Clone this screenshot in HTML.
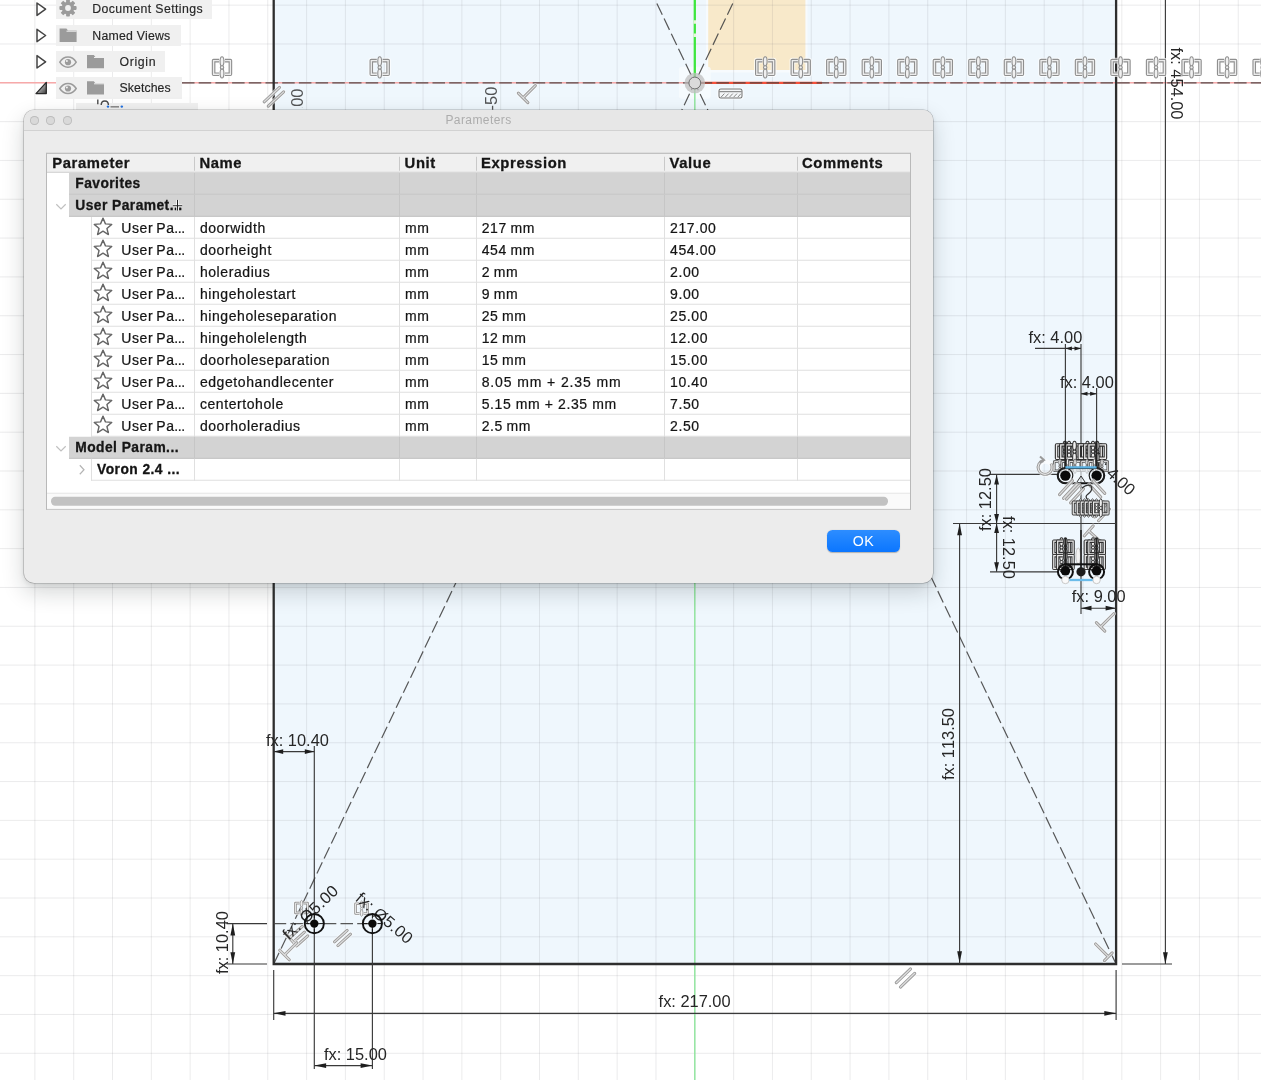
<!DOCTYPE html>
<html lang="en"><head><meta charset="utf-8"><title>Parameters</title>
<style>
html,body{margin:0;padding:0;background:#fff;}
body{width:1261px;height:1080px;position:relative;overflow:hidden;font-family:"Liberation Sans",Arial,sans-serif;}
.cv{position:absolute;left:0;top:0;display:block;will-change:transform;}
.tree{will-change:transform;position:absolute;left:0;top:0;width:260px;height:112px;overflow:hidden;}
.ti{position:absolute;background:#f0f0f0;}
.tt{position:absolute;font-size:12.3px;line-height:14px;color:#262626;-webkit-text-stroke:.15px #262626;letter-spacing:.62px;white-space:nowrap;}
.tsvg{position:absolute;left:0;top:0;}
.dlg{will-change:transform;position:absolute;left:24px;top:110px;width:909px;height:473px;background:#ececec;border-radius:10px;
 box-shadow:0 0 0 .6px rgba(0,0,0,.26),0 9px 22px rgba(20,30,30,.19),0 2px 6px rgba(20,30,30,.10);}
.tbar{position:absolute;left:0;top:0;right:0;height:20px;background:#e7e7e7;border-radius:10px 10px 0 0;border-bottom:1px solid #d2d2d2;}
.tl{position:absolute;top:5.8px;width:9.2px;height:9.2px;border-radius:50%;background:#d9d9d9;box-shadow:inset 0 0 0 .9px #bcbcbc;}
.ttl{position:absolute;left:0;right:0;top:3px;text-align:center;font-size:12px;line-height:14px;color:#adadad;letter-spacing:.42px;}
.tbl{position:absolute;left:22px;top:42px;width:865px;height:357px;background:#fff;border:1px solid #b9b9b9;border-top-color:#a9a9a9;box-sizing:border-box;overflow:hidden;transform:translate(0,.75px);}
.hd{position:absolute;left:0;top:0;right:0;height:18px;background:#f0f0f0;border-bottom:1px solid #cfcfcf;}
.h{position:absolute;top:0;font-weight:bold;font-size:14.8px;line-height:18px;color:#161616;letter-spacing:.62px;-webkit-text-stroke:.3px #161616;white-space:nowrap;}
.hs{position:absolute;top:2.5px;width:1px;height:14px;background:#c9c9c9;}
.gr{position:absolute;left:0;right:0;height:22px;}
.gbg{position:absolute;left:22px;right:0;top:0;bottom:0;background:#d3d3d3;border-bottom:1px solid #c2c2c2;box-sizing:border-box;}
.gl{position:absolute;left:28.3px;top:1.9px;font-weight:bold;font-size:13.8px;line-height:18px;color:#161616;letter-spacing:.45px;-webkit-text-stroke:.3px #161616;white-space:nowrap;}
.chv{position:absolute;left:7.5px;top:7.5px;}
.plus{position:absolute;left:124.6px;top:5px;}
.vs{position:absolute;top:0;bottom:0;width:1px;background:#c6c6c6;}
.rw{position:absolute;left:0;right:0;height:22px;}
.rw::after{content:"";position:absolute;left:44px;right:0;bottom:0;height:1px;background:#e0e0e0;}
.rw .vs{background:#e0e0e0;}
.star{position:absolute;left:46.2px;top:.3px;}
.c{position:absolute;top:2.8px;font-size:14px;line-height:17px;color:#141414;letter-spacing:.58px;margin-left:.1px;-webkit-text-stroke:.22px #141414;white-space:nowrap;}
.c.p{word-spacing:-1.3px}
.c u{text-decoration:none;letter-spacing:-.35px;margin-left:-.4px}
.c.b{top:2.1px;font-weight:bold;font-size:13.8px;letter-spacing:.45px;-webkit-text-stroke:.3px #161616;}
.chr{position:absolute;left:31px;top:4.5px;}
.sb{position:absolute;left:0;right:0;bottom:0;height:16px;background:#fafafa;border-top:1px solid #e6e6e6;box-sizing:border-box;}
.th{position:absolute;left:4px;top:3.4px;width:836.5px;height:8.4px;border-radius:4.2px;background:#c2c2c2;}
.ok{position:absolute;left:803px;top:420px;width:73px;height:22px;border-radius:5.5px;background:linear-gradient(#2d8dff,#0b76ff);color:#fff;font-size:14.2px;line-height:22px;text-align:center;letter-spacing:.4px;box-shadow:0 .5px 1px rgba(0,0,0,.25);}
</style></head>
<body>
<svg class="cv" width="1261" height="1080" viewBox="0 0 1261 1080"><rect x="0" y="0" width="1261" height="1080" fill="#ffffff"/>
<rect x="273.7" y="-5" width="842.3999999999999" height="969.0" fill="#eff7fd"/>
<rect x="706" y="-5" width="101.5" height="77.5" fill="#f7fbfe"/>
<rect x="708.2" y="-5" width="97.2" height="75" fill="#f8e9ca"/>
<rect x="678.8" y="66.8" width="32" height="32" rx="3" fill="#f7fbfe" fill-opacity="0.8"/>
<path d="M34.86 0V1080M73.68 0V1080M112.50 0V1080M151.32 0V1080M190.14 0V1080M228.96 0V1080M267.78 0V1080M306.60 0V1080M345.42 0V1080M384.24 0V1080M423.06 0V1080M461.88 0V1080M500.70 0V1080M539.52 0V1080M578.34 0V1080M617.16 0V1080M655.98 0V1080M694.80 0V1080M733.62 0V1080M772.44 0V1080M811.26 0V1080M850.08 0V1080M888.90 0V1080M927.72 0V1080M966.54 0V1080M1005.36 0V1080M1044.18 0V1080M1083.00 0V1080M1121.82 0V1080M1160.64 0V1080M1199.46 0V1080M1238.28 0V1080M0 5.16H1261M0 43.98H1261M0 82.80H1261M0 121.62H1261M0 160.44H1261M0 199.26H1261M0 238.08H1261M0 276.90H1261M0 315.72H1261M0 354.54H1261M0 393.36H1261M0 432.18H1261M0 471.00H1261M0 509.82H1261M0 548.64H1261M0 587.46H1261M0 626.28H1261M0 665.10H1261M0 703.92H1261M0 742.74H1261M0 781.56H1261M0 820.38H1261M0 859.20H1261M0 898.02H1261M0 936.84H1261M0 975.66H1261M0 1014.48H1261M0 1053.30H1261" stroke="#6e7276" stroke-opacity="0.14" stroke-width="1" fill="none"/>
<line x1="0" y1="82.8" x2="1261" y2="82.8" stroke="#f7a9a9" stroke-width="1.6"/>
<line x1="694.8" y1="82.8" x2="822" y2="82.8" stroke="#f8503a" stroke-width="2.3"/>
<line x1="694.8" y1="82.8" x2="694.8" y2="1080" stroke="#93e5a0" stroke-width="1.5"/>
<line x1="694.8" y1="0" x2="694.8" y2="82.8" stroke="#3fe63f" stroke-width="2.3"/>
<path d="M694.8 20.2v3.6M694.8 33.4v3.6" stroke="#e9f7dc" stroke-width="2.4"/>
<line x1="182" y1="82.8" x2="1261" y2="82.8" stroke="#454545" stroke-opacity="0.9" stroke-width="1.2" stroke-dasharray="12.5 4.2" fill="none"/>
<line x1="273.7" y1="964.0" x2="736.8" y2="-5" stroke="#454545" stroke-opacity="0.9" stroke-width="1.2" stroke-dasharray="12.5 4.2" fill="none"/>
<line x1="1116.1" y1="964.0" x2="652.8" y2="-5" stroke="#454545" stroke-opacity="0.9" stroke-width="1.2" stroke-dasharray="12.5 4.2" fill="none"/>
<path d="M273.7 -5V964.0H1116.1V-5" stroke="#2e2e2e" stroke-width="2.3" fill="none" stroke-linejoin="miter"/>
<circle cx="694.8" cy="83.0" r="10.3" fill="#bdbdbd" fill-opacity="0.72"/>
<circle cx="694.8" cy="83.0" r="5.9" fill="#dadada" stroke="#707070" stroke-width="1"/>
<g transform="translate(718.4 88.4)"><rect x="-1" y="-1" width="26.2" height="12" rx="2.5" fill="#fff" fill-opacity="0.7"/><rect x="0.6" y="0.6" width="23" height="9" rx="1.8" fill="#f4f6f7" stroke="#767676" stroke-width="1.05"/><path d="M1 3.3H23.2" stroke="#767676" stroke-width="1" fill="none"/><path d="M2.6 8.8L6 5.2M6.8 8.8L10.2 5.2M11 8.8L14.4 5.2M15.2 8.8L18.6 5.2M19.4 8.8L22.4 5.4" stroke="#7c7c7c" stroke-width="0.9" fill="none"/></g>
<g transform="translate(273.9 96.8) rotate(-43)"><path d="M-10.5 -3.0H10.5M-10.5 3.0H10.5" stroke="#ffffff" stroke-opacity="0.6" stroke-width="4.6" stroke-linecap="round" fill="none"/><path d="M-10.5 -3.0H10.5M-10.5 3.0H10.5" stroke="#9c9c9c" stroke-opacity="1" stroke-width="3.1" stroke-linecap="round" fill="none"/><path d="M-10.5 -3.0H10.5M-10.5 3.0H10.5" stroke="#dedede" stroke-opacity="1" stroke-width="1.2" stroke-linecap="round" fill="none"/></g>
<g transform="translate(523.1 97.9) rotate(45)"><path d="M-6.75 0H6.75M0 0V-17.3" stroke="#ffffff" stroke-opacity="0.6" stroke-width="4.6" stroke-linecap="round" fill="none"/><path d="M-6.75 0H6.75M0 0V-17.3" stroke="#9c9c9c" stroke-opacity="1" stroke-width="3.1" stroke-linecap="round" fill="none"/><path d="M-6.75 0H6.75M0 0V-17.3" stroke="#dedede" stroke-opacity="1" stroke-width="1.2" stroke-linecap="round" fill="none"/></g>
<g transform="translate(905.5 978) rotate(-44)"><path d="M-9.9 -3.0H9.9M-9.9 3.0H9.9" stroke="#ffffff" stroke-opacity="0.6" stroke-width="4.6" stroke-linecap="round" fill="none"/><path d="M-9.9 -3.0H9.9M-9.9 3.0H9.9" stroke="#9c9c9c" stroke-opacity="1" stroke-width="3.1" stroke-linecap="round" fill="none"/><path d="M-9.9 -3.0H9.9M-9.9 3.0H9.9" stroke="#dedede" stroke-opacity="1" stroke-width="1.2" stroke-linecap="round" fill="none"/></g>
<g transform="translate(1108.3 956.7) rotate(-45)"><path d="M-5.5 0H5.5M0 0V-18" stroke="#ffffff" stroke-opacity="0.6" stroke-width="4.6" stroke-linecap="round" fill="none"/><path d="M-5.5 0H5.5M0 0V-18" stroke="#9c9c9c" stroke-opacity="1" stroke-width="3.1" stroke-linecap="round" fill="none"/><path d="M-5.5 0H5.5M0 0V-18" stroke="#dedede" stroke-opacity="1" stroke-width="1.2" stroke-linecap="round" fill="none"/></g>
<clipPath id="rc"><rect x="0" y="0" width="1261" height="107.4"/></clipPath><g clip-path="url(#rc)">
<text x="303.2" y="121.4" text-anchor="start" font-family="Liberation Sans, Arial, sans-serif" font-size="16.4" fill="#262626" style="font-kerning:none" transform="rotate(-90 303.2 121.4)" fill-opacity="0.78">-100</text>
</g>
<text x="496.9" y="110.4" text-anchor="start" font-family="Liberation Sans, Arial, sans-serif" font-size="16.4" fill="#262626" style="font-kerning:none" transform="rotate(-90 496.9 110.4)" fill-opacity="0.78">-50</text>
<line x1="1165.4" y1="-5" x2="1165.4" y2="964.0" stroke="#3a3a3a" stroke-width="1.15" fill="none"/>
<path d="M0 0L-11.8 -2.4L-11.8 2.4Z" fill="#1e1e1e" transform="translate(1165.4 964.0) rotate(90)"/>
<line x1="1122" y1="964.0" x2="1172" y2="964.0" stroke="#3a3a3a" stroke-width="1.15" fill="none"/>
<text x="1171.3" y="47.5" text-anchor="start" font-family="Liberation Sans, Arial, sans-serif" font-size="16.4" fill="#262626" style="font-kerning:none" transform="rotate(90 1171.3 47.5)">fx: 454.00</text>
<g transform="translate(222 67.4) scale(1.0)" opacity="1"><path d="M-2.9 -6.8H-8.4V6.8H-2.9 M2.9 -6.8H8.4V6.8H2.9" stroke="#ffffff" stroke-opacity="0.7" stroke-width="5.6" fill="none" stroke-linejoin="round"/><path d="M-2.9 -6.8H-8.4V6.8H-2.9 M2.9 -6.8H8.4V6.8H2.9" stroke="#8f8f8f" stroke-width="3.6" fill="none" stroke-linejoin="round"/><path d="M-2.9 -6.8H-8.4V6.8H-2.9 M2.9 -6.8H8.4V6.8H2.9" stroke="#ececec" stroke-width="1.35" fill="none" stroke-linecap="square"/><ellipse cx="0" cy="-5.9" rx="1.9" ry="4.7" fill="#f0f0f0" stroke="#8f8f8f" stroke-width="1.1"/><ellipse cx="0" cy="5.9" rx="1.9" ry="4.7" fill="#f0f0f0" stroke="#8f8f8f" stroke-width="1.1"/><circle cx="0" cy="0" r="1.7" fill="#f0f0f0" stroke="#8f8f8f" stroke-width="1.1"/></g>
<g transform="translate(379.7 67.4) scale(1.0)" opacity="1"><path d="M-2.9 -6.8H-8.4V6.8H-2.9 M2.9 -6.8H8.4V6.8H2.9" stroke="#ffffff" stroke-opacity="0.7" stroke-width="5.6" fill="none" stroke-linejoin="round"/><path d="M-2.9 -6.8H-8.4V6.8H-2.9 M2.9 -6.8H8.4V6.8H2.9" stroke="#8f8f8f" stroke-width="3.6" fill="none" stroke-linejoin="round"/><path d="M-2.9 -6.8H-8.4V6.8H-2.9 M2.9 -6.8H8.4V6.8H2.9" stroke="#ececec" stroke-width="1.35" fill="none" stroke-linecap="square"/><ellipse cx="0" cy="-5.9" rx="1.9" ry="4.7" fill="#f0f0f0" stroke="#8f8f8f" stroke-width="1.1"/><ellipse cx="0" cy="5.9" rx="1.9" ry="4.7" fill="#f0f0f0" stroke="#8f8f8f" stroke-width="1.1"/><circle cx="0" cy="0" r="1.7" fill="#f0f0f0" stroke="#8f8f8f" stroke-width="1.1"/></g>
<g transform="translate(765.2 67.4) scale(1.0)" opacity="1"><path d="M-2.9 -6.8H-8.4V6.8H-2.9 M2.9 -6.8H8.4V6.8H2.9" stroke="#ffffff" stroke-opacity="0.7" stroke-width="5.6" fill="none" stroke-linejoin="round"/><path d="M-2.9 -6.8H-8.4V6.8H-2.9 M2.9 -6.8H8.4V6.8H2.9" stroke="#8f8f8f" stroke-width="3.6" fill="none" stroke-linejoin="round"/><path d="M-2.9 -6.8H-8.4V6.8H-2.9 M2.9 -6.8H8.4V6.8H2.9" stroke="#ececec" stroke-width="1.35" fill="none" stroke-linecap="square"/><ellipse cx="0" cy="-5.9" rx="1.9" ry="4.7" fill="#f0f0f0" stroke="#8f8f8f" stroke-width="1.1"/><ellipse cx="0" cy="5.9" rx="1.9" ry="4.7" fill="#f0f0f0" stroke="#8f8f8f" stroke-width="1.1"/><circle cx="0" cy="0" r="1.7" fill="#f0f0f0" stroke="#8f8f8f" stroke-width="1.1"/></g>
<g transform="translate(800.73 67.4) scale(1.0)" opacity="1"><path d="M-2.9 -6.8H-8.4V6.8H-2.9 M2.9 -6.8H8.4V6.8H2.9" stroke="#ffffff" stroke-opacity="0.7" stroke-width="5.6" fill="none" stroke-linejoin="round"/><path d="M-2.9 -6.8H-8.4V6.8H-2.9 M2.9 -6.8H8.4V6.8H2.9" stroke="#8f8f8f" stroke-width="3.6" fill="none" stroke-linejoin="round"/><path d="M-2.9 -6.8H-8.4V6.8H-2.9 M2.9 -6.8H8.4V6.8H2.9" stroke="#ececec" stroke-width="1.35" fill="none" stroke-linecap="square"/><ellipse cx="0" cy="-5.9" rx="1.9" ry="4.7" fill="#f0f0f0" stroke="#8f8f8f" stroke-width="1.1"/><ellipse cx="0" cy="5.9" rx="1.9" ry="4.7" fill="#f0f0f0" stroke="#8f8f8f" stroke-width="1.1"/><circle cx="0" cy="0" r="1.7" fill="#f0f0f0" stroke="#8f8f8f" stroke-width="1.1"/></g>
<g transform="translate(836.26 67.4) scale(1.0)" opacity="1"><path d="M-2.9 -6.8H-8.4V6.8H-2.9 M2.9 -6.8H8.4V6.8H2.9" stroke="#ffffff" stroke-opacity="0.7" stroke-width="5.6" fill="none" stroke-linejoin="round"/><path d="M-2.9 -6.8H-8.4V6.8H-2.9 M2.9 -6.8H8.4V6.8H2.9" stroke="#8f8f8f" stroke-width="3.6" fill="none" stroke-linejoin="round"/><path d="M-2.9 -6.8H-8.4V6.8H-2.9 M2.9 -6.8H8.4V6.8H2.9" stroke="#ececec" stroke-width="1.35" fill="none" stroke-linecap="square"/><ellipse cx="0" cy="-5.9" rx="1.9" ry="4.7" fill="#f0f0f0" stroke="#8f8f8f" stroke-width="1.1"/><ellipse cx="0" cy="5.9" rx="1.9" ry="4.7" fill="#f0f0f0" stroke="#8f8f8f" stroke-width="1.1"/><circle cx="0" cy="0" r="1.7" fill="#f0f0f0" stroke="#8f8f8f" stroke-width="1.1"/></g>
<g transform="translate(871.79 67.4) scale(1.0)" opacity="1"><path d="M-2.9 -6.8H-8.4V6.8H-2.9 M2.9 -6.8H8.4V6.8H2.9" stroke="#ffffff" stroke-opacity="0.7" stroke-width="5.6" fill="none" stroke-linejoin="round"/><path d="M-2.9 -6.8H-8.4V6.8H-2.9 M2.9 -6.8H8.4V6.8H2.9" stroke="#8f8f8f" stroke-width="3.6" fill="none" stroke-linejoin="round"/><path d="M-2.9 -6.8H-8.4V6.8H-2.9 M2.9 -6.8H8.4V6.8H2.9" stroke="#ececec" stroke-width="1.35" fill="none" stroke-linecap="square"/><ellipse cx="0" cy="-5.9" rx="1.9" ry="4.7" fill="#f0f0f0" stroke="#8f8f8f" stroke-width="1.1"/><ellipse cx="0" cy="5.9" rx="1.9" ry="4.7" fill="#f0f0f0" stroke="#8f8f8f" stroke-width="1.1"/><circle cx="0" cy="0" r="1.7" fill="#f0f0f0" stroke="#8f8f8f" stroke-width="1.1"/></g>
<g transform="translate(907.3199999999999 67.4) scale(1.0)" opacity="1"><path d="M-2.9 -6.8H-8.4V6.8H-2.9 M2.9 -6.8H8.4V6.8H2.9" stroke="#ffffff" stroke-opacity="0.7" stroke-width="5.6" fill="none" stroke-linejoin="round"/><path d="M-2.9 -6.8H-8.4V6.8H-2.9 M2.9 -6.8H8.4V6.8H2.9" stroke="#8f8f8f" stroke-width="3.6" fill="none" stroke-linejoin="round"/><path d="M-2.9 -6.8H-8.4V6.8H-2.9 M2.9 -6.8H8.4V6.8H2.9" stroke="#ececec" stroke-width="1.35" fill="none" stroke-linecap="square"/><ellipse cx="0" cy="-5.9" rx="1.9" ry="4.7" fill="#f0f0f0" stroke="#8f8f8f" stroke-width="1.1"/><ellipse cx="0" cy="5.9" rx="1.9" ry="4.7" fill="#f0f0f0" stroke="#8f8f8f" stroke-width="1.1"/><circle cx="0" cy="0" r="1.7" fill="#f0f0f0" stroke="#8f8f8f" stroke-width="1.1"/></g>
<g transform="translate(942.8499999999999 67.4) scale(1.0)" opacity="1"><path d="M-2.9 -6.8H-8.4V6.8H-2.9 M2.9 -6.8H8.4V6.8H2.9" stroke="#ffffff" stroke-opacity="0.7" stroke-width="5.6" fill="none" stroke-linejoin="round"/><path d="M-2.9 -6.8H-8.4V6.8H-2.9 M2.9 -6.8H8.4V6.8H2.9" stroke="#8f8f8f" stroke-width="3.6" fill="none" stroke-linejoin="round"/><path d="M-2.9 -6.8H-8.4V6.8H-2.9 M2.9 -6.8H8.4V6.8H2.9" stroke="#ececec" stroke-width="1.35" fill="none" stroke-linecap="square"/><ellipse cx="0" cy="-5.9" rx="1.9" ry="4.7" fill="#f0f0f0" stroke="#8f8f8f" stroke-width="1.1"/><ellipse cx="0" cy="5.9" rx="1.9" ry="4.7" fill="#f0f0f0" stroke="#8f8f8f" stroke-width="1.1"/><circle cx="0" cy="0" r="1.7" fill="#f0f0f0" stroke="#8f8f8f" stroke-width="1.1"/></g>
<g transform="translate(978.3799999999999 67.4) scale(1.0)" opacity="1"><path d="M-2.9 -6.8H-8.4V6.8H-2.9 M2.9 -6.8H8.4V6.8H2.9" stroke="#ffffff" stroke-opacity="0.7" stroke-width="5.6" fill="none" stroke-linejoin="round"/><path d="M-2.9 -6.8H-8.4V6.8H-2.9 M2.9 -6.8H8.4V6.8H2.9" stroke="#8f8f8f" stroke-width="3.6" fill="none" stroke-linejoin="round"/><path d="M-2.9 -6.8H-8.4V6.8H-2.9 M2.9 -6.8H8.4V6.8H2.9" stroke="#ececec" stroke-width="1.35" fill="none" stroke-linecap="square"/><ellipse cx="0" cy="-5.9" rx="1.9" ry="4.7" fill="#f0f0f0" stroke="#8f8f8f" stroke-width="1.1"/><ellipse cx="0" cy="5.9" rx="1.9" ry="4.7" fill="#f0f0f0" stroke="#8f8f8f" stroke-width="1.1"/><circle cx="0" cy="0" r="1.7" fill="#f0f0f0" stroke="#8f8f8f" stroke-width="1.1"/></g>
<g transform="translate(1013.9099999999999 67.4) scale(1.0)" opacity="1"><path d="M-2.9 -6.8H-8.4V6.8H-2.9 M2.9 -6.8H8.4V6.8H2.9" stroke="#ffffff" stroke-opacity="0.7" stroke-width="5.6" fill="none" stroke-linejoin="round"/><path d="M-2.9 -6.8H-8.4V6.8H-2.9 M2.9 -6.8H8.4V6.8H2.9" stroke="#8f8f8f" stroke-width="3.6" fill="none" stroke-linejoin="round"/><path d="M-2.9 -6.8H-8.4V6.8H-2.9 M2.9 -6.8H8.4V6.8H2.9" stroke="#ececec" stroke-width="1.35" fill="none" stroke-linecap="square"/><ellipse cx="0" cy="-5.9" rx="1.9" ry="4.7" fill="#f0f0f0" stroke="#8f8f8f" stroke-width="1.1"/><ellipse cx="0" cy="5.9" rx="1.9" ry="4.7" fill="#f0f0f0" stroke="#8f8f8f" stroke-width="1.1"/><circle cx="0" cy="0" r="1.7" fill="#f0f0f0" stroke="#8f8f8f" stroke-width="1.1"/></g>
<g transform="translate(1049.4399999999998 67.4) scale(1.0)" opacity="1"><path d="M-2.9 -6.8H-8.4V6.8H-2.9 M2.9 -6.8H8.4V6.8H2.9" stroke="#ffffff" stroke-opacity="0.7" stroke-width="5.6" fill="none" stroke-linejoin="round"/><path d="M-2.9 -6.8H-8.4V6.8H-2.9 M2.9 -6.8H8.4V6.8H2.9" stroke="#8f8f8f" stroke-width="3.6" fill="none" stroke-linejoin="round"/><path d="M-2.9 -6.8H-8.4V6.8H-2.9 M2.9 -6.8H8.4V6.8H2.9" stroke="#ececec" stroke-width="1.35" fill="none" stroke-linecap="square"/><ellipse cx="0" cy="-5.9" rx="1.9" ry="4.7" fill="#f0f0f0" stroke="#8f8f8f" stroke-width="1.1"/><ellipse cx="0" cy="5.9" rx="1.9" ry="4.7" fill="#f0f0f0" stroke="#8f8f8f" stroke-width="1.1"/><circle cx="0" cy="0" r="1.7" fill="#f0f0f0" stroke="#8f8f8f" stroke-width="1.1"/></g>
<g transform="translate(1084.9699999999998 67.4) scale(1.0)" opacity="1"><path d="M-2.9 -6.8H-8.4V6.8H-2.9 M2.9 -6.8H8.4V6.8H2.9" stroke="#ffffff" stroke-opacity="0.7" stroke-width="5.6" fill="none" stroke-linejoin="round"/><path d="M-2.9 -6.8H-8.4V6.8H-2.9 M2.9 -6.8H8.4V6.8H2.9" stroke="#8f8f8f" stroke-width="3.6" fill="none" stroke-linejoin="round"/><path d="M-2.9 -6.8H-8.4V6.8H-2.9 M2.9 -6.8H8.4V6.8H2.9" stroke="#ececec" stroke-width="1.35" fill="none" stroke-linecap="square"/><ellipse cx="0" cy="-5.9" rx="1.9" ry="4.7" fill="#f0f0f0" stroke="#8f8f8f" stroke-width="1.1"/><ellipse cx="0" cy="5.9" rx="1.9" ry="4.7" fill="#f0f0f0" stroke="#8f8f8f" stroke-width="1.1"/><circle cx="0" cy="0" r="1.7" fill="#f0f0f0" stroke="#8f8f8f" stroke-width="1.1"/></g>
<g transform="translate(1120.4999999999998 67.4) scale(1.0)" opacity="1"><path d="M-2.9 -6.8H-8.4V6.8H-2.9 M2.9 -6.8H8.4V6.8H2.9" stroke="#ffffff" stroke-opacity="0.7" stroke-width="5.6" fill="none" stroke-linejoin="round"/><path d="M-2.9 -6.8H-8.4V6.8H-2.9 M2.9 -6.8H8.4V6.8H2.9" stroke="#8f8f8f" stroke-width="3.6" fill="none" stroke-linejoin="round"/><path d="M-2.9 -6.8H-8.4V6.8H-2.9 M2.9 -6.8H8.4V6.8H2.9" stroke="#ececec" stroke-width="1.35" fill="none" stroke-linecap="square"/><ellipse cx="0" cy="-5.9" rx="1.9" ry="4.7" fill="#f0f0f0" stroke="#8f8f8f" stroke-width="1.1"/><ellipse cx="0" cy="5.9" rx="1.9" ry="4.7" fill="#f0f0f0" stroke="#8f8f8f" stroke-width="1.1"/><circle cx="0" cy="0" r="1.7" fill="#f0f0f0" stroke="#8f8f8f" stroke-width="1.1"/></g>
<g transform="translate(1156.0299999999997 67.4) scale(1.0)" opacity="1"><path d="M-2.9 -6.8H-8.4V6.8H-2.9 M2.9 -6.8H8.4V6.8H2.9" stroke="#ffffff" stroke-opacity="0.7" stroke-width="5.6" fill="none" stroke-linejoin="round"/><path d="M-2.9 -6.8H-8.4V6.8H-2.9 M2.9 -6.8H8.4V6.8H2.9" stroke="#8f8f8f" stroke-width="3.6" fill="none" stroke-linejoin="round"/><path d="M-2.9 -6.8H-8.4V6.8H-2.9 M2.9 -6.8H8.4V6.8H2.9" stroke="#ececec" stroke-width="1.35" fill="none" stroke-linecap="square"/><ellipse cx="0" cy="-5.9" rx="1.9" ry="4.7" fill="#f0f0f0" stroke="#8f8f8f" stroke-width="1.1"/><ellipse cx="0" cy="5.9" rx="1.9" ry="4.7" fill="#f0f0f0" stroke="#8f8f8f" stroke-width="1.1"/><circle cx="0" cy="0" r="1.7" fill="#f0f0f0" stroke="#8f8f8f" stroke-width="1.1"/></g>
<g transform="translate(1191.5599999999997 67.4) scale(1.0)" opacity="1"><path d="M-2.9 -6.8H-8.4V6.8H-2.9 M2.9 -6.8H8.4V6.8H2.9" stroke="#ffffff" stroke-opacity="0.7" stroke-width="5.6" fill="none" stroke-linejoin="round"/><path d="M-2.9 -6.8H-8.4V6.8H-2.9 M2.9 -6.8H8.4V6.8H2.9" stroke="#8f8f8f" stroke-width="3.6" fill="none" stroke-linejoin="round"/><path d="M-2.9 -6.8H-8.4V6.8H-2.9 M2.9 -6.8H8.4V6.8H2.9" stroke="#ececec" stroke-width="1.35" fill="none" stroke-linecap="square"/><ellipse cx="0" cy="-5.9" rx="1.9" ry="4.7" fill="#f0f0f0" stroke="#8f8f8f" stroke-width="1.1"/><ellipse cx="0" cy="5.9" rx="1.9" ry="4.7" fill="#f0f0f0" stroke="#8f8f8f" stroke-width="1.1"/><circle cx="0" cy="0" r="1.7" fill="#f0f0f0" stroke="#8f8f8f" stroke-width="1.1"/></g>
<g transform="translate(1227.0899999999997 67.4) scale(1.0)" opacity="1"><path d="M-2.9 -6.8H-8.4V6.8H-2.9 M2.9 -6.8H8.4V6.8H2.9" stroke="#ffffff" stroke-opacity="0.7" stroke-width="5.6" fill="none" stroke-linejoin="round"/><path d="M-2.9 -6.8H-8.4V6.8H-2.9 M2.9 -6.8H8.4V6.8H2.9" stroke="#8f8f8f" stroke-width="3.6" fill="none" stroke-linejoin="round"/><path d="M-2.9 -6.8H-8.4V6.8H-2.9 M2.9 -6.8H8.4V6.8H2.9" stroke="#ececec" stroke-width="1.35" fill="none" stroke-linecap="square"/><ellipse cx="0" cy="-5.9" rx="1.9" ry="4.7" fill="#f0f0f0" stroke="#8f8f8f" stroke-width="1.1"/><ellipse cx="0" cy="5.9" rx="1.9" ry="4.7" fill="#f0f0f0" stroke="#8f8f8f" stroke-width="1.1"/><circle cx="0" cy="0" r="1.7" fill="#f0f0f0" stroke="#8f8f8f" stroke-width="1.1"/></g>
<g transform="translate(1262.6199999999997 67.4) scale(1.0)" opacity="1"><path d="M-2.9 -6.8H-8.4V6.8H-2.9 M2.9 -6.8H8.4V6.8H2.9" stroke="#ffffff" stroke-opacity="0.7" stroke-width="5.6" fill="none" stroke-linejoin="round"/><path d="M-2.9 -6.8H-8.4V6.8H-2.9 M2.9 -6.8H8.4V6.8H2.9" stroke="#8f8f8f" stroke-width="3.6" fill="none" stroke-linejoin="round"/><path d="M-2.9 -6.8H-8.4V6.8H-2.9 M2.9 -6.8H8.4V6.8H2.9" stroke="#ececec" stroke-width="1.35" fill="none" stroke-linecap="square"/><ellipse cx="0" cy="-5.9" rx="1.9" ry="4.7" fill="#f0f0f0" stroke="#8f8f8f" stroke-width="1.1"/><ellipse cx="0" cy="5.9" rx="1.9" ry="4.7" fill="#f0f0f0" stroke="#8f8f8f" stroke-width="1.1"/><circle cx="0" cy="0" r="1.7" fill="#f0f0f0" stroke="#8f8f8f" stroke-width="1.1"/></g>
<line x1="273.7" y1="1013.3" x2="1116.1" y2="1013.3" stroke="#3a3a3a" stroke-width="1.15" fill="none"/>
<path d="M0 0L-11.8 -2.4L-11.8 2.4Z" fill="#1e1e1e" transform="translate(273.7 1013.3) rotate(180)"/>
<path d="M0 0L-11.8 -2.4L-11.8 2.4Z" fill="#1e1e1e" transform="translate(1116.1 1013.3) rotate(0)"/>
<line x1="273.7" y1="970" x2="273.7" y2="1020" stroke="#3a3a3a" stroke-width="1.15" fill="none"/>
<line x1="1116.1" y1="970" x2="1116.1" y2="1020" stroke="#3a3a3a" stroke-width="1.15" fill="none"/>
<text x="658.6" y="1006.5" text-anchor="start" font-family="Liberation Sans, Arial, sans-serif" font-size="16.4" fill="#262626" style="font-kerning:none">fx: 217.00</text>
<line x1="959.6" y1="523.5" x2="959.6" y2="964.0" stroke="#3a3a3a" stroke-width="1.15" fill="none"/>
<path d="M0 0L-11.8 -2.4L-11.8 2.4Z" fill="#1e1e1e" transform="translate(959.6 523.5) rotate(-90)"/>
<path d="M0 0L-11.8 -2.4L-11.8 2.4Z" fill="#1e1e1e" transform="translate(959.6 963.0) rotate(90)"/>
<text x="954" y="780" text-anchor="start" font-family="Liberation Sans, Arial, sans-serif" font-size="16.4" fill="#262626" style="font-kerning:none" transform="rotate(-90 954 780)">fx: 113.50</text>
<line x1="226.5" y1="923.6" x2="267" y2="923.6" stroke="#3a3a3a" stroke-width="1.15" fill="none"/>
<line x1="226.5" y1="964.0" x2="267" y2="964.0" stroke="#3a3a3a" stroke-width="1.15" fill="none"/>
<line x1="232.8" y1="923.6" x2="232.8" y2="964.0" stroke="#3a3a3a" stroke-width="1.15" fill="none"/>
<path d="M0 0L-11.8 -2.4L-11.8 2.4Z" fill="#1e1e1e" transform="translate(232.8 923.6) rotate(-90)"/>
<path d="M0 0L-11.8 -2.4L-11.8 2.4Z" fill="#1e1e1e" transform="translate(232.8 964.0) rotate(90)"/>
<text x="227.5" y="974" text-anchor="start" font-family="Liberation Sans, Arial, sans-serif" font-size="16.4" fill="#262626" style="font-kerning:none" transform="rotate(-90 227.5 974)">fx: 10.40</text>
<line x1="273.7" y1="923.6" x2="372.4" y2="923.6" stroke="#454545" stroke-opacity="0.9" stroke-width="1.2" stroke-dasharray="12.5 4.2" fill="none"/>
<line x1="314.3" y1="746" x2="314.3" y2="1069" stroke="#3a3a3a" stroke-width="1.15" fill="none"/>
<line x1="372.4" y1="923.6" x2="372.4" y2="1069" stroke="#3a3a3a" stroke-width="1.15" fill="none"/>
<line x1="273.7" y1="751.6" x2="314.3" y2="751.6" stroke="#3a3a3a" stroke-width="1.15" fill="none"/>
<path d="M0 0L-9.5 -2.4L-9.5 2.4Z" fill="#1e1e1e" transform="translate(273.7 751.6) rotate(180)"/>
<path d="M0 0L-9.5 -2.4L-9.5 2.4Z" fill="#1e1e1e" transform="translate(314.3 751.6) rotate(0)"/>
<text x="266" y="745.8" text-anchor="start" font-family="Liberation Sans, Arial, sans-serif" font-size="16.4" fill="#262626" style="font-kerning:none">fx: 10.40</text>
<line x1="314.3" y1="1065.6" x2="372.4" y2="1065.6" stroke="#3a3a3a" stroke-width="1.15" fill="none"/>
<path d="M0 0L-11.8 -2.4L-11.8 2.4Z" fill="#1e1e1e" transform="translate(314.3 1065.6) rotate(180)"/>
<path d="M0 0L-11.8 -2.4L-11.8 2.4Z" fill="#1e1e1e" transform="translate(372.4 1065.6) rotate(0)"/>
<text x="324" y="1059.5" text-anchor="start" font-family="Liberation Sans, Arial, sans-serif" font-size="16.4" fill="#262626" style="font-kerning:none">fx: 15.00</text>
<g transform="translate(301.5 908) scale(0.72)" opacity="1"><path d="M-2.9 -6.8H-8.4V6.8H-2.9 M2.9 -6.8H8.4V6.8H2.9" stroke="#ffffff" stroke-opacity="0.7" stroke-width="5.6" fill="none" stroke-linejoin="round"/><path d="M-2.9 -6.8H-8.4V6.8H-2.9 M2.9 -6.8H8.4V6.8H2.9" stroke="#8f8f8f" stroke-width="3.6" fill="none" stroke-linejoin="round"/><path d="M-2.9 -6.8H-8.4V6.8H-2.9 M2.9 -6.8H8.4V6.8H2.9" stroke="#ececec" stroke-width="1.35" fill="none" stroke-linecap="square"/><ellipse cx="0" cy="-5.9" rx="1.9" ry="4.7" fill="#f0f0f0" stroke="#8f8f8f" stroke-width="1.1"/><ellipse cx="0" cy="5.9" rx="1.9" ry="4.7" fill="#f0f0f0" stroke="#8f8f8f" stroke-width="1.1"/><circle cx="0" cy="0" r="1.7" fill="#f0f0f0" stroke="#8f8f8f" stroke-width="1.1"/></g>
<g transform="translate(361.6 908.6) scale(0.72)" opacity="1"><path d="M-2.9 -6.8H-8.4V6.8H-2.9 M2.9 -6.8H8.4V6.8H2.9" stroke="#ffffff" stroke-opacity="0.7" stroke-width="5.6" fill="none" stroke-linejoin="round"/><path d="M-2.9 -6.8H-8.4V6.8H-2.9 M2.9 -6.8H8.4V6.8H2.9" stroke="#8f8f8f" stroke-width="3.6" fill="none" stroke-linejoin="round"/><path d="M-2.9 -6.8H-8.4V6.8H-2.9 M2.9 -6.8H8.4V6.8H2.9" stroke="#ececec" stroke-width="1.35" fill="none" stroke-linecap="square"/><ellipse cx="0" cy="-5.9" rx="1.9" ry="4.7" fill="#f0f0f0" stroke="#8f8f8f" stroke-width="1.1"/><ellipse cx="0" cy="5.9" rx="1.9" ry="4.7" fill="#f0f0f0" stroke="#8f8f8f" stroke-width="1.1"/><circle cx="0" cy="0" r="1.7" fill="#f0f0f0" stroke="#8f8f8f" stroke-width="1.1"/></g>
<g transform="translate(342.5 938) rotate(-42)"><path d="M-8.5 -2.5H8.5M-8.5 2.5H8.5" stroke="#ffffff" stroke-opacity="0.6" stroke-width="4.6" stroke-linecap="round" fill="none"/><path d="M-8.5 -2.5H8.5M-8.5 2.5H8.5" stroke="#9c9c9c" stroke-opacity="1" stroke-width="3.1" stroke-linecap="round" fill="none"/><path d="M-8.5 -2.5H8.5M-8.5 2.5H8.5" stroke="#dedede" stroke-opacity="1" stroke-width="1.2" stroke-linecap="round" fill="none"/></g>
<g transform="translate(300.5 939) rotate(-42)"><path d="M-7.5 -2.5H7.5M-7.5 2.5H7.5" stroke="#ffffff" stroke-opacity="0.6" stroke-width="4.6" stroke-linecap="round" fill="none"/><path d="M-7.5 -2.5H7.5M-7.5 2.5H7.5" stroke="#9c9c9c" stroke-opacity="1" stroke-width="3.1" stroke-linecap="round" fill="none"/><path d="M-7.5 -2.5H7.5M-7.5 2.5H7.5" stroke="#dedede" stroke-opacity="1" stroke-width="1.2" stroke-linecap="round" fill="none"/></g>
<g transform="translate(289.5 938) rotate(48)"><path d="M-6.75 0H6.75M0 0V-17.3" stroke="#ffffff" stroke-opacity="0.6" stroke-width="4.6" stroke-linecap="round" fill="none"/><path d="M-6.75 0H6.75M0 0V-17.3" stroke="#9c9c9c" stroke-opacity="1" stroke-width="3.1" stroke-linecap="round" fill="none"/><path d="M-6.75 0H6.75M0 0V-17.3" stroke="#dedede" stroke-opacity="1" stroke-width="1.2" stroke-linecap="round" fill="none"/></g>
<g transform="translate(284.5 955) rotate(45)"><path d="M-6.75 0H6.75M0 0V-17.3" stroke="#ffffff" stroke-opacity="0.6" stroke-width="4.6" stroke-linecap="round" fill="none"/><path d="M-6.75 0H6.75M0 0V-17.3" stroke="#9c9c9c" stroke-opacity="1" stroke-width="3.1" stroke-linecap="round" fill="none"/><path d="M-6.75 0H6.75M0 0V-17.3" stroke="#dedede" stroke-opacity="1" stroke-width="1.2" stroke-linecap="round" fill="none"/></g>
<text x="289" y="940.8" text-anchor="start" font-family="Liberation Sans, Arial, sans-serif" font-size="16.4" fill="#262626" style="font-kerning:none" transform="rotate(-44 289 940.8)" letter-spacing="0.45">fx: Ø5.00</text>
<text x="354.5" y="900" text-anchor="start" font-family="Liberation Sans, Arial, sans-serif" font-size="16.4" fill="#262626" style="font-kerning:none" transform="rotate(40.3 354.5 900)" letter-spacing="0.3">fx: Ø5.00</text>
<circle cx="314.3" cy="923.6" r="9.6" fill="none" stroke="#111" stroke-width="1.9"/>
<circle cx="314.3" cy="923.6" r="4.2" fill="#0a0a0a"/>
<path d="M305.3 923.6h4M319.3 923.6h4M314.3 914.6v4M314.3 928.6v4" stroke="#111" stroke-width="1"/>
<circle cx="372.4" cy="923.6" r="9.6" fill="none" stroke="#111" stroke-width="1.9"/>
<circle cx="372.4" cy="923.6" r="4.2" fill="#0a0a0a"/>
<path d="M363.4 923.6h4M377.4 923.6h4M372.4 914.6v4M372.4 928.6v4" stroke="#111" stroke-width="1"/>
<line x1="1065.4" y1="344" x2="1065.4" y2="475.0" stroke="#3a3a3a" stroke-width="1.15" fill="none"/>
<line x1="1081.0" y1="344" x2="1081.0" y2="614" stroke="#3a3a3a" stroke-width="1.15" fill="none"/>
<line x1="1096.6" y1="388" x2="1096.6" y2="475.0" stroke="#3a3a3a" stroke-width="1.15" fill="none"/>
<line x1="1035" y1="348.4" x2="1081.0" y2="348.4" stroke="#3a3a3a" stroke-width="1.15" fill="none"/>
<path d="M0 0L-6.5 -2L-6.5 2Z" fill="#1e1e1e" transform="translate(1065.4 348.4) rotate(180)"/>
<path d="M0 0L-6.5 -2L-6.5 2Z" fill="#1e1e1e" transform="translate(1081.0 348.4) rotate(0)"/>
<text x="1028.5" y="342.8" text-anchor="start" font-family="Liberation Sans, Arial, sans-serif" font-size="16.4" fill="#262626" style="font-kerning:none">fx: 4.00</text>
<line x1="1081.0" y1="393.8" x2="1096.6" y2="393.8" stroke="#3a3a3a" stroke-width="1.15" fill="none"/>
<path d="M0 0L-6.5 -2L-6.5 2Z" fill="#1e1e1e" transform="translate(1081.0 393.8) rotate(180)"/>
<path d="M0 0L-6.5 -2L-6.5 2Z" fill="#1e1e1e" transform="translate(1096.6 393.8) rotate(0)"/>
<text x="1060" y="387.6" text-anchor="start" font-family="Liberation Sans, Arial, sans-serif" font-size="16.4" fill="#262626" style="font-kerning:none">fx: 4.00</text>
<line x1="990" y1="474.4" x2="1057" y2="474.4" stroke="#3a3a3a" stroke-width="1.15" fill="none"/>
<line x1="953" y1="523.5" x2="1116.1" y2="523.5" stroke="#3a3a3a" stroke-width="1.15" fill="none"/>
<line x1="990" y1="571.8" x2="1057" y2="571.8" stroke="#3a3a3a" stroke-width="1.15" fill="none"/>
<line x1="996.6" y1="475.0" x2="996.6" y2="571.8" stroke="#3a3a3a" stroke-width="1.15" fill="none"/>
<path d="M0 0L-9.5 -2.4L-9.5 2.4Z" fill="#1e1e1e" transform="translate(996.6 475.0) rotate(-90)"/>
<path d="M0 0L-9.5 -2.4L-9.5 2.4Z" fill="#1e1e1e" transform="translate(996.6 523.5) rotate(90)"/>
<path d="M0 0L-9.5 -2.4L-9.5 2.4Z" fill="#1e1e1e" transform="translate(996.6 523.5) rotate(-90)"/>
<path d="M0 0L-9.5 -2.4L-9.5 2.4Z" fill="#1e1e1e" transform="translate(996.6 571.8) rotate(90)"/>
<text x="990.5" y="531" text-anchor="start" font-family="Liberation Sans, Arial, sans-serif" font-size="16.4" fill="#262626" style="font-kerning:none" transform="rotate(-90 990.5 531)">fx: 12.50</text>
<text x="1002.5" y="516" text-anchor="start" font-family="Liberation Sans, Arial, sans-serif" font-size="16.4" fill="#262626" style="font-kerning:none" transform="rotate(90 1002.5 516)">fx: 12.50</text>
<line x1="1081.0" y1="608.2" x2="1116.1" y2="608.2" stroke="#3a3a3a" stroke-width="1.15" fill="none"/>
<path d="M0 0L-10.5 -2.4L-10.5 2.4Z" fill="#1e1e1e" transform="translate(1081.0 608.2) rotate(180)"/>
<path d="M0 0L-10.5 -2.4L-10.5 2.4Z" fill="#1e1e1e" transform="translate(1116.1 608.2) rotate(0)"/>
<text x="1071.8" y="601.8" text-anchor="start" font-family="Liberation Sans, Arial, sans-serif" font-size="16.4" fill="#262626" style="font-kerning:none">fx: 9.00</text>
<g transform="translate(1088.7 530.9) rotate(132)"><path d="M-6.75 0H6.75M0 0V-13" stroke="#ffffff" stroke-opacity="0.6" stroke-width="4.6" stroke-linecap="round" fill="none"/><path d="M-6.75 0H6.75M0 0V-13" stroke="#9c9c9c" stroke-opacity="1" stroke-width="3.1" stroke-linecap="round" fill="none"/><path d="M-6.75 0H6.75M0 0V-13" stroke="#dedede" stroke-opacity="1" stroke-width="1.2" stroke-linecap="round" fill="none"/></g>
<g transform="translate(1100.6 626.9) rotate(45)"><path d="M-6.0 0H6.0M0 0V-18.6" stroke="#ffffff" stroke-opacity="0.6" stroke-width="4.6" stroke-linecap="round" fill="none"/><path d="M-6.0 0H6.0M0 0V-18.6" stroke="#9c9c9c" stroke-opacity="1" stroke-width="3.1" stroke-linecap="round" fill="none"/><path d="M-6.0 0H6.0M0 0V-18.6" stroke="#dedede" stroke-opacity="1" stroke-width="1.2" stroke-linecap="round" fill="none"/></g>
<text x="1089.5" y="459.6" text-anchor="start" font-family="Liberation Sans, Arial, sans-serif" font-size="16.4" fill="#262626" style="font-kerning:none" transform="rotate(43 1089.5 459.6)">fx: 4.00</text>
<g transform="translate(1064.8 451.6) scale(0.98)" opacity="1"><path d="M-2.9 -6.8H-8.4V6.8H-2.9 M2.9 -6.8H8.4V6.8H2.9" stroke="#2f2f2f" stroke-width="3.6" fill="none" stroke-linejoin="round"/><path d="M-2.9 -6.8H-8.4V6.8H-2.9 M2.9 -6.8H8.4V6.8H2.9" stroke="#ececec" stroke-width="1.35" fill="none" stroke-linecap="square"/><ellipse cx="0" cy="-5.9" rx="1.9" ry="4.7" fill="#f0f0f0" stroke="#2f2f2f" stroke-width="1.1"/><ellipse cx="0" cy="5.9" rx="1.9" ry="4.7" fill="#f0f0f0" stroke="#2f2f2f" stroke-width="1.1"/><circle cx="0" cy="0" r="1.7" fill="#f0f0f0" stroke="#2f2f2f" stroke-width="1.1"/></g>
<g transform="translate(1069.0 451.6) scale(0.98)" opacity="1"><path d="M-2.9 -6.8H-8.4V6.8H-2.9 M2.9 -6.8H8.4V6.8H2.9" stroke="#2f2f2f" stroke-width="3.6" fill="none" stroke-linejoin="round"/><path d="M-2.9 -6.8H-8.4V6.8H-2.9 M2.9 -6.8H8.4V6.8H2.9" stroke="#ececec" stroke-width="1.35" fill="none" stroke-linecap="square"/><ellipse cx="0" cy="-5.9" rx="1.9" ry="4.7" fill="#f0f0f0" stroke="#2f2f2f" stroke-width="1.1"/><ellipse cx="0" cy="5.9" rx="1.9" ry="4.7" fill="#f0f0f0" stroke="#2f2f2f" stroke-width="1.1"/><circle cx="0" cy="0" r="1.7" fill="#f0f0f0" stroke="#2f2f2f" stroke-width="1.1"/></g>
<g transform="translate(1074.5 451.6) scale(0.98)" opacity="1"><path d="M-2.9 -6.8H-8.4V6.8H-2.9 M2.9 -6.8H8.4V6.8H2.9" stroke="#2f2f2f" stroke-width="3.6" fill="none" stroke-linejoin="round"/><path d="M-2.9 -6.8H-8.4V6.8H-2.9 M2.9 -6.8H8.4V6.8H2.9" stroke="#ececec" stroke-width="1.35" fill="none" stroke-linecap="square"/><ellipse cx="0" cy="-5.9" rx="1.9" ry="4.7" fill="#f0f0f0" stroke="#2f2f2f" stroke-width="1.1"/><ellipse cx="0" cy="5.9" rx="1.9" ry="4.7" fill="#f0f0f0" stroke="#2f2f2f" stroke-width="1.1"/><circle cx="0" cy="0" r="1.7" fill="#f0f0f0" stroke="#2f2f2f" stroke-width="1.1"/></g>
<g transform="translate(1087.5 451.6) scale(0.98)" opacity="1"><path d="M-2.9 -6.8H-8.4V6.8H-2.9 M2.9 -6.8H8.4V6.8H2.9" stroke="#2f2f2f" stroke-width="3.6" fill="none" stroke-linejoin="round"/><path d="M-2.9 -6.8H-8.4V6.8H-2.9 M2.9 -6.8H8.4V6.8H2.9" stroke="#ececec" stroke-width="1.35" fill="none" stroke-linecap="square"/><ellipse cx="0" cy="-5.9" rx="1.9" ry="4.7" fill="#f0f0f0" stroke="#2f2f2f" stroke-width="1.1"/><ellipse cx="0" cy="5.9" rx="1.9" ry="4.7" fill="#f0f0f0" stroke="#2f2f2f" stroke-width="1.1"/><circle cx="0" cy="0" r="1.7" fill="#f0f0f0" stroke="#2f2f2f" stroke-width="1.1"/></g>
<g transform="translate(1093 451.6) scale(0.98)" opacity="1"><path d="M-2.9 -6.8H-8.4V6.8H-2.9 M2.9 -6.8H8.4V6.8H2.9" stroke="#2f2f2f" stroke-width="3.6" fill="none" stroke-linejoin="round"/><path d="M-2.9 -6.8H-8.4V6.8H-2.9 M2.9 -6.8H8.4V6.8H2.9" stroke="#ececec" stroke-width="1.35" fill="none" stroke-linecap="square"/><ellipse cx="0" cy="-5.9" rx="1.9" ry="4.7" fill="#f0f0f0" stroke="#2f2f2f" stroke-width="1.1"/><ellipse cx="0" cy="5.9" rx="1.9" ry="4.7" fill="#f0f0f0" stroke="#2f2f2f" stroke-width="1.1"/><circle cx="0" cy="0" r="1.7" fill="#f0f0f0" stroke="#2f2f2f" stroke-width="1.1"/></g>
<g transform="translate(1097.2 451.6) scale(0.98)" opacity="1"><path d="M-2.9 -6.8H-8.4V6.8H-2.9 M2.9 -6.8H8.4V6.8H2.9" stroke="#2f2f2f" stroke-width="3.6" fill="none" stroke-linejoin="round"/><path d="M-2.9 -6.8H-8.4V6.8H-2.9 M2.9 -6.8H8.4V6.8H2.9" stroke="#ececec" stroke-width="1.35" fill="none" stroke-linecap="square"/><ellipse cx="0" cy="-5.9" rx="1.9" ry="4.7" fill="#f0f0f0" stroke="#2f2f2f" stroke-width="1.1"/><ellipse cx="0" cy="5.9" rx="1.9" ry="4.7" fill="#f0f0f0" stroke="#2f2f2f" stroke-width="1.1"/><circle cx="0" cy="0" r="1.7" fill="#f0f0f0" stroke="#2f2f2f" stroke-width="1.1"/></g>
<g transform="translate(1060 466.2) scale(0.68)" opacity="1"><path d="M-2.9 -6.8H-8.4V6.8H-2.9 M2.9 -6.8H8.4V6.8H2.9" stroke="#4a4a4a" stroke-width="3.6" fill="none" stroke-linejoin="round"/><path d="M-2.9 -6.8H-8.4V6.8H-2.9 M2.9 -6.8H8.4V6.8H2.9" stroke="#ececec" stroke-width="1.35" fill="none" stroke-linecap="square"/><ellipse cx="0" cy="-5.9" rx="1.9" ry="4.7" fill="#f0f0f0" stroke="#4a4a4a" stroke-width="1.1"/><ellipse cx="0" cy="5.9" rx="1.9" ry="4.7" fill="#f0f0f0" stroke="#4a4a4a" stroke-width="1.1"/><circle cx="0" cy="0" r="1.7" fill="#f0f0f0" stroke="#4a4a4a" stroke-width="1.1"/></g>
<g transform="translate(1067.5 466.2) scale(0.68)" opacity="1"><path d="M-2.9 -6.8H-8.4V6.8H-2.9 M2.9 -6.8H8.4V6.8H2.9" stroke="#4a4a4a" stroke-width="3.6" fill="none" stroke-linejoin="round"/><path d="M-2.9 -6.8H-8.4V6.8H-2.9 M2.9 -6.8H8.4V6.8H2.9" stroke="#ececec" stroke-width="1.35" fill="none" stroke-linecap="square"/><ellipse cx="0" cy="-5.9" rx="1.9" ry="4.7" fill="#f0f0f0" stroke="#4a4a4a" stroke-width="1.1"/><ellipse cx="0" cy="5.9" rx="1.9" ry="4.7" fill="#f0f0f0" stroke="#4a4a4a" stroke-width="1.1"/><circle cx="0" cy="0" r="1.7" fill="#f0f0f0" stroke="#4a4a4a" stroke-width="1.1"/></g>
<g transform="translate(1075 466.2) scale(0.68)" opacity="1"><path d="M-2.9 -6.8H-8.4V6.8H-2.9 M2.9 -6.8H8.4V6.8H2.9" stroke="#4a4a4a" stroke-width="3.6" fill="none" stroke-linejoin="round"/><path d="M-2.9 -6.8H-8.4V6.8H-2.9 M2.9 -6.8H8.4V6.8H2.9" stroke="#ececec" stroke-width="1.35" fill="none" stroke-linecap="square"/><ellipse cx="0" cy="-5.9" rx="1.9" ry="4.7" fill="#f0f0f0" stroke="#4a4a4a" stroke-width="1.1"/><ellipse cx="0" cy="5.9" rx="1.9" ry="4.7" fill="#f0f0f0" stroke="#4a4a4a" stroke-width="1.1"/><circle cx="0" cy="0" r="1.7" fill="#f0f0f0" stroke="#4a4a4a" stroke-width="1.1"/></g>
<g transform="translate(1087 466.2) scale(0.68)" opacity="1"><path d="M-2.9 -6.8H-8.4V6.8H-2.9 M2.9 -6.8H8.4V6.8H2.9" stroke="#4a4a4a" stroke-width="3.6" fill="none" stroke-linejoin="round"/><path d="M-2.9 -6.8H-8.4V6.8H-2.9 M2.9 -6.8H8.4V6.8H2.9" stroke="#ececec" stroke-width="1.35" fill="none" stroke-linecap="square"/><ellipse cx="0" cy="-5.9" rx="1.9" ry="4.7" fill="#f0f0f0" stroke="#4a4a4a" stroke-width="1.1"/><ellipse cx="0" cy="5.9" rx="1.9" ry="4.7" fill="#f0f0f0" stroke="#4a4a4a" stroke-width="1.1"/><circle cx="0" cy="0" r="1.7" fill="#f0f0f0" stroke="#4a4a4a" stroke-width="1.1"/></g>
<g transform="translate(1094.5 466.2) scale(0.68)" opacity="1"><path d="M-2.9 -6.8H-8.4V6.8H-2.9 M2.9 -6.8H8.4V6.8H2.9" stroke="#4a4a4a" stroke-width="3.6" fill="none" stroke-linejoin="round"/><path d="M-2.9 -6.8H-8.4V6.8H-2.9 M2.9 -6.8H8.4V6.8H2.9" stroke="#ececec" stroke-width="1.35" fill="none" stroke-linecap="square"/><ellipse cx="0" cy="-5.9" rx="1.9" ry="4.7" fill="#f0f0f0" stroke="#4a4a4a" stroke-width="1.1"/><ellipse cx="0" cy="5.9" rx="1.9" ry="4.7" fill="#f0f0f0" stroke="#4a4a4a" stroke-width="1.1"/><circle cx="0" cy="0" r="1.7" fill="#f0f0f0" stroke="#4a4a4a" stroke-width="1.1"/></g>
<g transform="translate(1102 466.2) scale(0.68)" opacity="1"><path d="M-2.9 -6.8H-8.4V6.8H-2.9 M2.9 -6.8H8.4V6.8H2.9" stroke="#4a4a4a" stroke-width="3.6" fill="none" stroke-linejoin="round"/><path d="M-2.9 -6.8H-8.4V6.8H-2.9 M2.9 -6.8H8.4V6.8H2.9" stroke="#ececec" stroke-width="1.35" fill="none" stroke-linecap="square"/><ellipse cx="0" cy="-5.9" rx="1.9" ry="4.7" fill="#f0f0f0" stroke="#4a4a4a" stroke-width="1.1"/><ellipse cx="0" cy="5.9" rx="1.9" ry="4.7" fill="#f0f0f0" stroke="#4a4a4a" stroke-width="1.1"/><circle cx="0" cy="0" r="1.7" fill="#f0f0f0" stroke="#4a4a4a" stroke-width="1.1"/></g>
<path d="M1065.4 441v28" stroke="#222" stroke-width="2"/>
<path d="M1096.6 441v28" stroke="#222" stroke-width="2"/>
<g transform="translate(1045.5 468)"><circle r="6.5" fill="none" stroke="#fff" stroke-opacity=".7" stroke-width="4.5"/><path d="M-2 -7.5A7 7 0 1 0 5.5 -4.5" fill="none" stroke="#9a9a9a" stroke-width="3"/><path d="M-2 -7.5A7 7 0 1 0 5.5 -4.5" fill="none" stroke="#e6e6e6" stroke-width="1.1"/><path d="M-5.5 -11.5l4 3.6-4.5 2.4" fill="none" stroke="#9a9a9a" stroke-width="2"/></g>
<path d="M1065.4 467.90000000000003H1096.6A7.7 7.7 0 0 1 1096.6 483.3H1065.4A7.7 7.7 0 0 1 1065.4 467.90000000000003Z" fill="#f4f8fb" fill-opacity="0.6" stroke="#111" stroke-width="2"/>
<circle cx="1065.4" cy="475.6" r="7.4" fill="none" stroke="#222" stroke-width="1.2"/>
<circle cx="1065.4" cy="475.6" r="5.2" fill="#0a0a0a"/>
<circle cx="1096.6" cy="475.6" r="7.4" fill="none" stroke="#222" stroke-width="1.2"/>
<circle cx="1096.6" cy="475.6" r="5.2" fill="#0a0a0a"/>
<line x1="1065.4" y1="467.4" x2="1096.6" y2="467.4" stroke="#5ab1e2" stroke-width="2.3"/>
<path d="M1077.0 482.0l4 -6 4 6" stroke="#333" stroke-width="1" fill="none"/>
<g transform="translate(1068 489.5) rotate(-47)"><path d="M-9.5 -2.75H9.5M-9.5 2.75H9.5" stroke="#ffffff" stroke-opacity="0.6" stroke-width="4.6" stroke-linecap="round" fill="none"/><path d="M-9.5 -2.75H9.5M-9.5 2.75H9.5" stroke="#9c9c9c" stroke-opacity="1" stroke-width="3.1" stroke-linecap="round" fill="none"/><path d="M-9.5 -2.75H9.5M-9.5 2.75H9.5" stroke="#dedede" stroke-opacity="1" stroke-width="1.2" stroke-linecap="round" fill="none"/></g>
<g transform="translate(1075 494) rotate(-47)"><path d="M-9.5 -2.75H9.5M-9.5 2.75H9.5" stroke="#ffffff" stroke-opacity="0.6" stroke-width="4.6" stroke-linecap="round" fill="none"/><path d="M-9.5 -2.75H9.5M-9.5 2.75H9.5" stroke="#9c9c9c" stroke-opacity="1" stroke-width="3.1" stroke-linecap="round" fill="none"/><path d="M-9.5 -2.75H9.5M-9.5 2.75H9.5" stroke="#dedede" stroke-opacity="1" stroke-width="1.2" stroke-linecap="round" fill="none"/></g>
<g transform="translate(1097 489) rotate(47)"><path d="M-8.5 -2.75H8.5M-8.5 2.75H8.5" stroke="#ffffff" stroke-opacity="0.6" stroke-width="4.6" stroke-linecap="round" fill="none"/><path d="M-8.5 -2.75H8.5M-8.5 2.75H8.5" stroke="#9c9c9c" stroke-opacity="1" stroke-width="3.1" stroke-linecap="round" fill="none"/><path d="M-8.5 -2.75H8.5M-8.5 2.75H8.5" stroke="#dedede" stroke-opacity="1" stroke-width="1.2" stroke-linecap="round" fill="none"/></g>
<g transform="translate(1102 513) rotate(-47)"><path d="M-8.0 -2.75H8.0M-8.0 2.75H8.0" stroke="#ffffff" stroke-opacity="0.6" stroke-width="4.6" stroke-linecap="round" fill="none"/><path d="M-8.0 -2.75H8.0M-8.0 2.75H8.0" stroke="#9c9c9c" stroke-opacity="1" stroke-width="3.1" stroke-linecap="round" fill="none"/><path d="M-8.0 -2.75H8.0M-8.0 2.75H8.0" stroke="#dedede" stroke-opacity="1" stroke-width="1.2" stroke-linecap="round" fill="none"/></g>
<path d="M1082 488c6 -5 12 -3 9 3c-2 4 -8 4 -3 9" stroke="#333" stroke-width="1.3" fill="none"/>
<g transform="translate(1080.5 508) scale(0.86)" opacity="1"><path d="M-2.9 -6.8H-8.4V6.8H-2.9 M2.9 -6.8H8.4V6.8H2.9" stroke="#3c3c3c" stroke-width="3.6" fill="none" stroke-linejoin="round"/><path d="M-2.9 -6.8H-8.4V6.8H-2.9 M2.9 -6.8H8.4V6.8H2.9" stroke="#ececec" stroke-width="1.35" fill="none" stroke-linecap="square"/><ellipse cx="0" cy="-5.9" rx="1.9" ry="4.7" fill="#f0f0f0" stroke="#3c3c3c" stroke-width="1.1"/><ellipse cx="0" cy="5.9" rx="1.9" ry="4.7" fill="#f0f0f0" stroke="#3c3c3c" stroke-width="1.1"/><circle cx="0" cy="0" r="1.7" fill="#f0f0f0" stroke="#3c3c3c" stroke-width="1.1"/></g>
<g transform="translate(1084.5 508) scale(0.86)" opacity="1"><path d="M-2.9 -6.8H-8.4V6.8H-2.9 M2.9 -6.8H8.4V6.8H2.9" stroke="#3c3c3c" stroke-width="3.6" fill="none" stroke-linejoin="round"/><path d="M-2.9 -6.8H-8.4V6.8H-2.9 M2.9 -6.8H8.4V6.8H2.9" stroke="#ececec" stroke-width="1.35" fill="none" stroke-linecap="square"/><ellipse cx="0" cy="-5.9" rx="1.9" ry="4.7" fill="#f0f0f0" stroke="#3c3c3c" stroke-width="1.1"/><ellipse cx="0" cy="5.9" rx="1.9" ry="4.7" fill="#f0f0f0" stroke="#3c3c3c" stroke-width="1.1"/><circle cx="0" cy="0" r="1.7" fill="#f0f0f0" stroke="#3c3c3c" stroke-width="1.1"/></g>
<g transform="translate(1088.5 508) scale(0.86)" opacity="1"><path d="M-2.9 -6.8H-8.4V6.8H-2.9 M2.9 -6.8H8.4V6.8H2.9" stroke="#3c3c3c" stroke-width="3.6" fill="none" stroke-linejoin="round"/><path d="M-2.9 -6.8H-8.4V6.8H-2.9 M2.9 -6.8H8.4V6.8H2.9" stroke="#ececec" stroke-width="1.35" fill="none" stroke-linecap="square"/><ellipse cx="0" cy="-5.9" rx="1.9" ry="4.7" fill="#f0f0f0" stroke="#3c3c3c" stroke-width="1.1"/><ellipse cx="0" cy="5.9" rx="1.9" ry="4.7" fill="#f0f0f0" stroke="#3c3c3c" stroke-width="1.1"/><circle cx="0" cy="0" r="1.7" fill="#f0f0f0" stroke="#3c3c3c" stroke-width="1.1"/></g>
<g transform="translate(1092.5 508) scale(0.86)" opacity="1"><path d="M-2.9 -6.8H-8.4V6.8H-2.9 M2.9 -6.8H8.4V6.8H2.9" stroke="#3c3c3c" stroke-width="3.6" fill="none" stroke-linejoin="round"/><path d="M-2.9 -6.8H-8.4V6.8H-2.9 M2.9 -6.8H8.4V6.8H2.9" stroke="#ececec" stroke-width="1.35" fill="none" stroke-linecap="square"/><ellipse cx="0" cy="-5.9" rx="1.9" ry="4.7" fill="#f0f0f0" stroke="#3c3c3c" stroke-width="1.1"/><ellipse cx="0" cy="5.9" rx="1.9" ry="4.7" fill="#f0f0f0" stroke="#3c3c3c" stroke-width="1.1"/><circle cx="0" cy="0" r="1.7" fill="#f0f0f0" stroke="#3c3c3c" stroke-width="1.1"/></g>
<g transform="translate(1096.5 508) scale(0.86)" opacity="1"><path d="M-2.9 -6.8H-8.4V6.8H-2.9 M2.9 -6.8H8.4V6.8H2.9" stroke="#3c3c3c" stroke-width="3.6" fill="none" stroke-linejoin="round"/><path d="M-2.9 -6.8H-8.4V6.8H-2.9 M2.9 -6.8H8.4V6.8H2.9" stroke="#ececec" stroke-width="1.35" fill="none" stroke-linecap="square"/><ellipse cx="0" cy="-5.9" rx="1.9" ry="4.7" fill="#f0f0f0" stroke="#3c3c3c" stroke-width="1.1"/><ellipse cx="0" cy="5.9" rx="1.9" ry="4.7" fill="#f0f0f0" stroke="#3c3c3c" stroke-width="1.1"/><circle cx="0" cy="0" r="1.7" fill="#f0f0f0" stroke="#3c3c3c" stroke-width="1.1"/></g>
<g transform="translate(1100.8 508) scale(0.86)" opacity="1"><path d="M-2.9 -6.8H-8.4V6.8H-2.9 M2.9 -6.8H8.4V6.8H2.9" stroke="#3c3c3c" stroke-width="3.6" fill="none" stroke-linejoin="round"/><path d="M-2.9 -6.8H-8.4V6.8H-2.9 M2.9 -6.8H8.4V6.8H2.9" stroke="#ececec" stroke-width="1.35" fill="none" stroke-linecap="square"/><ellipse cx="0" cy="-5.9" rx="1.9" ry="4.7" fill="#f0f0f0" stroke="#3c3c3c" stroke-width="1.1"/><ellipse cx="0" cy="5.9" rx="1.9" ry="4.7" fill="#f0f0f0" stroke="#3c3c3c" stroke-width="1.1"/><circle cx="0" cy="0" r="1.7" fill="#f0f0f0" stroke="#3c3c3c" stroke-width="1.1"/></g>
<g transform="translate(1061.5 547.5) scale(0.92)" opacity="1"><path d="M-2.9 -6.8H-8.4V6.8H-2.9 M2.9 -6.8H8.4V6.8H2.9" stroke="#2f2f2f" stroke-width="3.6" fill="none" stroke-linejoin="round"/><path d="M-2.9 -6.8H-8.4V6.8H-2.9 M2.9 -6.8H8.4V6.8H2.9" stroke="#ececec" stroke-width="1.35" fill="none" stroke-linecap="square"/><ellipse cx="0" cy="-5.9" rx="1.9" ry="4.7" fill="#f0f0f0" stroke="#2f2f2f" stroke-width="1.1"/><ellipse cx="0" cy="5.9" rx="1.9" ry="4.7" fill="#f0f0f0" stroke="#2f2f2f" stroke-width="1.1"/><circle cx="0" cy="0" r="1.7" fill="#f0f0f0" stroke="#2f2f2f" stroke-width="1.1"/></g>
<g transform="translate(1061.5 562) scale(0.92)" opacity="1"><path d="M-2.9 -6.8H-8.4V6.8H-2.9 M2.9 -6.8H8.4V6.8H2.9" stroke="#3a3a3a" stroke-width="3.6" fill="none" stroke-linejoin="round"/><path d="M-2.9 -6.8H-8.4V6.8H-2.9 M2.9 -6.8H8.4V6.8H2.9" stroke="#ececec" stroke-width="1.35" fill="none" stroke-linecap="square"/><ellipse cx="0" cy="-5.9" rx="1.9" ry="4.7" fill="#f0f0f0" stroke="#3a3a3a" stroke-width="1.1"/><ellipse cx="0" cy="5.9" rx="1.9" ry="4.7" fill="#f0f0f0" stroke="#3a3a3a" stroke-width="1.1"/><circle cx="0" cy="0" r="1.7" fill="#f0f0f0" stroke="#3a3a3a" stroke-width="1.1"/></g>
<g transform="translate(1065.4 547.5) scale(0.92)" opacity="1"><path d="M-2.9 -6.8H-8.4V6.8H-2.9 M2.9 -6.8H8.4V6.8H2.9" stroke="#2f2f2f" stroke-width="3.6" fill="none" stroke-linejoin="round"/><path d="M-2.9 -6.8H-8.4V6.8H-2.9 M2.9 -6.8H8.4V6.8H2.9" stroke="#ececec" stroke-width="1.35" fill="none" stroke-linecap="square"/><ellipse cx="0" cy="-5.9" rx="1.9" ry="4.7" fill="#f0f0f0" stroke="#2f2f2f" stroke-width="1.1"/><ellipse cx="0" cy="5.9" rx="1.9" ry="4.7" fill="#f0f0f0" stroke="#2f2f2f" stroke-width="1.1"/><circle cx="0" cy="0" r="1.7" fill="#f0f0f0" stroke="#2f2f2f" stroke-width="1.1"/></g>
<g transform="translate(1065.4 562) scale(0.92)" opacity="1"><path d="M-2.9 -6.8H-8.4V6.8H-2.9 M2.9 -6.8H8.4V6.8H2.9" stroke="#3a3a3a" stroke-width="3.6" fill="none" stroke-linejoin="round"/><path d="M-2.9 -6.8H-8.4V6.8H-2.9 M2.9 -6.8H8.4V6.8H2.9" stroke="#ececec" stroke-width="1.35" fill="none" stroke-linecap="square"/><ellipse cx="0" cy="-5.9" rx="1.9" ry="4.7" fill="#f0f0f0" stroke="#3a3a3a" stroke-width="1.1"/><ellipse cx="0" cy="5.9" rx="1.9" ry="4.7" fill="#f0f0f0" stroke="#3a3a3a" stroke-width="1.1"/><circle cx="0" cy="0" r="1.7" fill="#f0f0f0" stroke="#3a3a3a" stroke-width="1.1"/></g>
<g transform="translate(1093 547.5) scale(0.92)" opacity="1"><path d="M-2.9 -6.8H-8.4V6.8H-2.9 M2.9 -6.8H8.4V6.8H2.9" stroke="#2f2f2f" stroke-width="3.6" fill="none" stroke-linejoin="round"/><path d="M-2.9 -6.8H-8.4V6.8H-2.9 M2.9 -6.8H8.4V6.8H2.9" stroke="#ececec" stroke-width="1.35" fill="none" stroke-linecap="square"/><ellipse cx="0" cy="-5.9" rx="1.9" ry="4.7" fill="#f0f0f0" stroke="#2f2f2f" stroke-width="1.1"/><ellipse cx="0" cy="5.9" rx="1.9" ry="4.7" fill="#f0f0f0" stroke="#2f2f2f" stroke-width="1.1"/><circle cx="0" cy="0" r="1.7" fill="#f0f0f0" stroke="#2f2f2f" stroke-width="1.1"/></g>
<g transform="translate(1093 562) scale(0.92)" opacity="1"><path d="M-2.9 -6.8H-8.4V6.8H-2.9 M2.9 -6.8H8.4V6.8H2.9" stroke="#3a3a3a" stroke-width="3.6" fill="none" stroke-linejoin="round"/><path d="M-2.9 -6.8H-8.4V6.8H-2.9 M2.9 -6.8H8.4V6.8H2.9" stroke="#ececec" stroke-width="1.35" fill="none" stroke-linecap="square"/><ellipse cx="0" cy="-5.9" rx="1.9" ry="4.7" fill="#f0f0f0" stroke="#3a3a3a" stroke-width="1.1"/><ellipse cx="0" cy="5.9" rx="1.9" ry="4.7" fill="#f0f0f0" stroke="#3a3a3a" stroke-width="1.1"/><circle cx="0" cy="0" r="1.7" fill="#f0f0f0" stroke="#3a3a3a" stroke-width="1.1"/></g>
<g transform="translate(1096.6 547.5) scale(0.92)" opacity="1"><path d="M-2.9 -6.8H-8.4V6.8H-2.9 M2.9 -6.8H8.4V6.8H2.9" stroke="#2f2f2f" stroke-width="3.6" fill="none" stroke-linejoin="round"/><path d="M-2.9 -6.8H-8.4V6.8H-2.9 M2.9 -6.8H8.4V6.8H2.9" stroke="#ececec" stroke-width="1.35" fill="none" stroke-linecap="square"/><ellipse cx="0" cy="-5.9" rx="1.9" ry="4.7" fill="#f0f0f0" stroke="#2f2f2f" stroke-width="1.1"/><ellipse cx="0" cy="5.9" rx="1.9" ry="4.7" fill="#f0f0f0" stroke="#2f2f2f" stroke-width="1.1"/><circle cx="0" cy="0" r="1.7" fill="#f0f0f0" stroke="#2f2f2f" stroke-width="1.1"/></g>
<g transform="translate(1096.6 562) scale(0.92)" opacity="1"><path d="M-2.9 -6.8H-8.4V6.8H-2.9 M2.9 -6.8H8.4V6.8H2.9" stroke="#3a3a3a" stroke-width="3.6" fill="none" stroke-linejoin="round"/><path d="M-2.9 -6.8H-8.4V6.8H-2.9 M2.9 -6.8H8.4V6.8H2.9" stroke="#ececec" stroke-width="1.35" fill="none" stroke-linecap="square"/><ellipse cx="0" cy="-5.9" rx="1.9" ry="4.7" fill="#f0f0f0" stroke="#3a3a3a" stroke-width="1.1"/><ellipse cx="0" cy="5.9" rx="1.9" ry="4.7" fill="#f0f0f0" stroke="#3a3a3a" stroke-width="1.1"/><circle cx="0" cy="0" r="1.7" fill="#f0f0f0" stroke="#3a3a3a" stroke-width="1.1"/></g>
<path d="M1065.4 538v30" stroke="#222" stroke-width="2"/>
<path d="M1096.6 538v30" stroke="#222" stroke-width="2"/>
<ellipse cx="1078.2" cy="556" rx="2.3" ry="8" fill="#f2f2f2" stroke="#c4c4c4" stroke-width="1"/>
<line x1="1081.0" y1="530" x2="1081.0" y2="572" stroke="#222" stroke-width="1.6"/>
<line x1="1065.4" y1="564.3" x2="1096.6" y2="564.3" stroke="#111" stroke-width="2"/>
<circle cx="1065.4" cy="571.8" r="7.5" fill="none" stroke="#111" stroke-width="2"/>
<circle cx="1065.4" cy="570.8" r="4.8" fill="#0a0a0a"/>
<circle cx="1096.6" cy="571.8" r="7.5" fill="none" stroke="#111" stroke-width="2"/>
<circle cx="1096.6" cy="570.8" r="4.8" fill="#0a0a0a"/>
<circle cx="1081.0" cy="571.8" r="4.6" fill="#1c1c1c"/>
<line x1="1065.4" y1="580" x2="1096.6" y2="580" stroke="#6bbcea" stroke-width="2.3"/>
<circle cx="1065.4" cy="580" r="3.7" fill="#fafafa" stroke="#c8c8c8" stroke-width="1"/>
<circle cx="1096.6" cy="580" r="3.7" fill="#fafafa" stroke="#c8c8c8" stroke-width="1"/></svg>

<div class="tree">
 <div class="ti" style="left:56px;top:-3px;width:156px;height:22px"></div>
 <div class="ti" style="left:56px;top:24.5px;width:125px;height:21.5px"></div>
 <div class="ti" style="left:56px;top:50.8px;width:108.5px;height:21.2px"></div>
 <div class="ti" style="left:56px;top:77.2px;width:126px;height:21.4px"></div>
 <div class="ti" style="left:76px;top:103.4px;width:121.5px;height:10px"></div>
 <span class="tt" style="left:92.3px;top:2.2px;letter-spacing:.4px">Document Settings</span>
 <span class="tt" style="left:92.3px;top:28.6px;letter-spacing:.23px">Named Views</span>
 <span class="tt" style="left:119.6px;top:55px;letter-spacing:.62px">Origin</span>
 <span class="tt" style="left:119.6px;top:81.3px;letter-spacing:.07px">Sketches</span>
 <svg class="tsvg" width="260" height="112" viewBox="0 0 260 112">
  <g fill="none" stroke="#444" stroke-width="1.5" stroke-linejoin="round">
   <path d="M37 3V15.4L45.6 9.2Z"/><path d="M37 29.3V41.7L45.6 35.5Z"/><path d="M37 55.6V68L45.6 61.8Z"/>
  </g>
  <defs><linearGradient id="tg" x1="0" y1="0" x2="1" y2="1"><stop offset="0.35" stop-color="#bdbdbd"/><stop offset="1" stop-color="#3a3a3a"/></linearGradient></defs>
  <path d="M46.3 82.4V93.6H36Z" fill="url(#tg)" stroke="#2a2a2a" stroke-width="1.3" stroke-linejoin="round"/>
  <!-- gear -->
  <g transform="translate(68 8)" fill="#9b9b9b">
   <g id="gt"><rect x="-1.9" y="-8.6" width="3.8" height="17.2" rx="0.8"/></g>
   <rect x="-1.9" y="-8.6" width="3.8" height="17.2" rx="0.8" transform="rotate(45)"/>
   <rect x="-1.9" y="-8.6" width="3.8" height="17.2" rx="0.8" transform="rotate(90)"/>
   <rect x="-1.9" y="-8.6" width="3.8" height="17.2" rx="0.8" transform="rotate(135)"/>
   <circle r="6.3"/><circle r="2.9" fill="#f0f0f0"/>
  </g>
  <!-- folders -->
  <g fill="#9b9b9b">
   <path d="M59.6 28.6H66.4L68 30.6H76.6V42H59.6Z"/>
   <path d="M87 54.9H93.8L95.4 56.9H104V68.3H87Z"/>
   <path d="M87 81.2H93.8L95.4 83.2H104V94.6H87Z"/>
  </g>
  <g stroke="#f0f0f0" stroke-width="1"><path d="M66.5 31.2H76.6M94 57.5H104M94 83.8H104"/></g>
  <!-- eyes -->
  <g fill="none" stroke="#9b9b9b" stroke-width="1.5">
   <path d="M59.8 62.2C64 55.4 72 55.4 76.2 62.2C72 69 64 69 59.8 62.2Z"/>
   <path d="M59.8 88.5C64 81.7 72 81.7 76.2 88.5C72 95.3 64 95.3 59.8 88.5Z"/>
  </g>
  <circle cx="68" cy="62.2" r="3.1" fill="#9b9b9b"/><circle cx="68" cy="88.5" r="3.1" fill="#9b9b9b"/>
  <circle cx="66.9" cy="61.1" r="1" fill="#f0f0f0"/><circle cx="66.9" cy="87.4" r="1" fill="#f0f0f0"/>
  <!-- partially hidden row -->
  <path d="M97.8 99.6V104.2M101.2 105C101.2 99.6 108.4 99.6 108.4 105" fill="none" stroke="#4a4a4a" stroke-width="1.4"/>
  <path d="M110.5 106.8H119" stroke="#8c8c8c" stroke-width="1.6"/>
  <circle cx="108" cy="106.6" r="1.2" fill="#1f6fe0"/><circle cx="121.8" cy="106.6" r="1.2" fill="#1f6fe0"/>
 </svg>
</div>

<div class="dlg">
<div class="tbar"><i class="tl" style="left:5.8px"></i><i class="tl" style="left:22.1px"></i><i class="tl" style="left:38.5px"></i><span class="ttl">Parameters</span></div>
<div class="tbl">
<div class="hd"><span class="h" style="left:5.2px">Parameter</span><i class="hs" style="left:147px"></i><span class="h" style="left:152.4px">Name</span><i class="hs" style="left:352px"></i><span class="h" style="left:357.6px">Unit</span><i class="hs" style="left:429px"></i><span class="h" style="left:434px">Expression</span><i class="hs" style="left:617px"></i><span class="h" style="left:622.6px">Value</span><i class="hs" style="left:750px"></i><span class="h" style="left:755px">Comments</span></div>
<div class="gr" style="top:19px"><div class="gbg"></div><span class="gl">Favorites</span><i class="vs" style="left:147px"></i><i class="vs" style="left:352px"></i><i class="vs" style="left:429px"></i><i class="vs" style="left:617px"></i><i class="vs" style="left:750px"></i></div>
<div class="gr" style="top:41px"><svg class="chv" width="12" height="8" viewBox="0 0 12 8"><path d="M1.3 1.5L6 6.2L10.7 1.5" fill="none" stroke="#c0c0c0" stroke-width="1.2"/></svg><div class="gbg"></div><span class="gl">User Paramet...</span><svg class="plus" width="11" height="11" viewBox="0 0 14 14"><path d="M7 0V14M1 7.6H13" stroke="#fff" stroke-width="3.2"/><path d="M7 0V14M1 7.6H13" stroke="#222" stroke-width="1.3"/></svg><i class="vs" style="left:147px"></i><i class="vs" style="left:352px"></i><i class="vs" style="left:429px"></i><i class="vs" style="left:617px"></i><i class="vs" style="left:750px"></i></div>
<div class="rw" style="top:63px"><svg class="star" width="20" height="19" viewBox="-10 -10 20 19"><path d="M0 -8.3L2.35 -2.75L8.4 -2.3L3.8 1.65L5.2 7.5L0 4.3L-5.2 7.5L-3.8 1.65L-8.4 -2.3L-2.35 -2.75Z" fill="#fff" stroke="#666" stroke-width="1.35" stroke-linejoin="round" transform="scale(1.04)"/></svg><span class="c p" style="left:74.2px">User Pa<u>...</u></span><span class="c" style="left:152.8px">doorwidth</span><span class="c" style="left:357.8px">mm</span><span class="c" style="left:434.6px;word-spacing:-.8px">217 mm</span><span class="c" style="left:623px">217.00</span><i class="vs" style="left:44px"></i><i class="vs" style="left:147px"></i><i class="vs" style="left:352px"></i><i class="vs" style="left:429px"></i><i class="vs" style="left:617px"></i><i class="vs" style="left:750px"></i></div>
<div class="rw" style="top:85px"><svg class="star" width="20" height="19" viewBox="-10 -10 20 19"><path d="M0 -8.3L2.35 -2.75L8.4 -2.3L3.8 1.65L5.2 7.5L0 4.3L-5.2 7.5L-3.8 1.65L-8.4 -2.3L-2.35 -2.75Z" fill="#fff" stroke="#666" stroke-width="1.35" stroke-linejoin="round" transform="scale(1.04)"/></svg><span class="c p" style="left:74.2px">User Pa<u>...</u></span><span class="c" style="left:152.8px">doorheight</span><span class="c" style="left:357.8px">mm</span><span class="c" style="left:434.6px;word-spacing:-.8px">454 mm</span><span class="c" style="left:623px">454.00</span><i class="vs" style="left:44px"></i><i class="vs" style="left:147px"></i><i class="vs" style="left:352px"></i><i class="vs" style="left:429px"></i><i class="vs" style="left:617px"></i><i class="vs" style="left:750px"></i></div>
<div class="rw" style="top:107px"><svg class="star" width="20" height="19" viewBox="-10 -10 20 19"><path d="M0 -8.3L2.35 -2.75L8.4 -2.3L3.8 1.65L5.2 7.5L0 4.3L-5.2 7.5L-3.8 1.65L-8.4 -2.3L-2.35 -2.75Z" fill="#fff" stroke="#666" stroke-width="1.35" stroke-linejoin="round" transform="scale(1.04)"/></svg><span class="c p" style="left:74.2px">User Pa<u>...</u></span><span class="c" style="left:152.8px">holeradius</span><span class="c" style="left:357.8px">mm</span><span class="c" style="left:434.6px;word-spacing:-.8px">2 mm</span><span class="c" style="left:623px">2.00</span><i class="vs" style="left:44px"></i><i class="vs" style="left:147px"></i><i class="vs" style="left:352px"></i><i class="vs" style="left:429px"></i><i class="vs" style="left:617px"></i><i class="vs" style="left:750px"></i></div>
<div class="rw" style="top:129px"><svg class="star" width="20" height="19" viewBox="-10 -10 20 19"><path d="M0 -8.3L2.35 -2.75L8.4 -2.3L3.8 1.65L5.2 7.5L0 4.3L-5.2 7.5L-3.8 1.65L-8.4 -2.3L-2.35 -2.75Z" fill="#fff" stroke="#666" stroke-width="1.35" stroke-linejoin="round" transform="scale(1.04)"/></svg><span class="c p" style="left:74.2px">User Pa<u>...</u></span><span class="c" style="left:152.8px">hingeholestart</span><span class="c" style="left:357.8px">mm</span><span class="c" style="left:434.6px;word-spacing:-.8px">9 mm</span><span class="c" style="left:623px">9.00</span><i class="vs" style="left:44px"></i><i class="vs" style="left:147px"></i><i class="vs" style="left:352px"></i><i class="vs" style="left:429px"></i><i class="vs" style="left:617px"></i><i class="vs" style="left:750px"></i></div>
<div class="rw" style="top:151px"><svg class="star" width="20" height="19" viewBox="-10 -10 20 19"><path d="M0 -8.3L2.35 -2.75L8.4 -2.3L3.8 1.65L5.2 7.5L0 4.3L-5.2 7.5L-3.8 1.65L-8.4 -2.3L-2.35 -2.75Z" fill="#fff" stroke="#666" stroke-width="1.35" stroke-linejoin="round" transform="scale(1.04)"/></svg><span class="c p" style="left:74.2px">User Pa<u>...</u></span><span class="c" style="left:152.8px">hingeholeseparation</span><span class="c" style="left:357.8px">mm</span><span class="c" style="left:434.6px;word-spacing:-.8px">25 mm</span><span class="c" style="left:623px">25.00</span><i class="vs" style="left:44px"></i><i class="vs" style="left:147px"></i><i class="vs" style="left:352px"></i><i class="vs" style="left:429px"></i><i class="vs" style="left:617px"></i><i class="vs" style="left:750px"></i></div>
<div class="rw" style="top:173px"><svg class="star" width="20" height="19" viewBox="-10 -10 20 19"><path d="M0 -8.3L2.35 -2.75L8.4 -2.3L3.8 1.65L5.2 7.5L0 4.3L-5.2 7.5L-3.8 1.65L-8.4 -2.3L-2.35 -2.75Z" fill="#fff" stroke="#666" stroke-width="1.35" stroke-linejoin="round" transform="scale(1.04)"/></svg><span class="c p" style="left:74.2px">User Pa<u>...</u></span><span class="c" style="left:152.8px">hingeholelength</span><span class="c" style="left:357.8px">mm</span><span class="c" style="left:434.6px;word-spacing:-.8px">12 mm</span><span class="c" style="left:623px">12.00</span><i class="vs" style="left:44px"></i><i class="vs" style="left:147px"></i><i class="vs" style="left:352px"></i><i class="vs" style="left:429px"></i><i class="vs" style="left:617px"></i><i class="vs" style="left:750px"></i></div>
<div class="rw" style="top:195px"><svg class="star" width="20" height="19" viewBox="-10 -10 20 19"><path d="M0 -8.3L2.35 -2.75L8.4 -2.3L3.8 1.65L5.2 7.5L0 4.3L-5.2 7.5L-3.8 1.65L-8.4 -2.3L-2.35 -2.75Z" fill="#fff" stroke="#666" stroke-width="1.35" stroke-linejoin="round" transform="scale(1.04)"/></svg><span class="c p" style="left:74.2px">User Pa<u>...</u></span><span class="c" style="left:152.8px">doorholeseparation</span><span class="c" style="left:357.8px">mm</span><span class="c" style="left:434.6px;word-spacing:-.8px">15 mm</span><span class="c" style="left:623px">15.00</span><i class="vs" style="left:44px"></i><i class="vs" style="left:147px"></i><i class="vs" style="left:352px"></i><i class="vs" style="left:429px"></i><i class="vs" style="left:617px"></i><i class="vs" style="left:750px"></i></div>
<div class="rw" style="top:217px"><svg class="star" width="20" height="19" viewBox="-10 -10 20 19"><path d="M0 -8.3L2.35 -2.75L8.4 -2.3L3.8 1.65L5.2 7.5L0 4.3L-5.2 7.5L-3.8 1.65L-8.4 -2.3L-2.35 -2.75Z" fill="#fff" stroke="#666" stroke-width="1.35" stroke-linejoin="round" transform="scale(1.04)"/></svg><span class="c p" style="left:74.2px">User Pa<u>...</u></span><span class="c" style="left:152.8px">edgetohandlecenter</span><span class="c" style="left:357.8px">mm</span><span class="c" style="left:434.6px;letter-spacing:.88px">8.05 mm + 2.35 mm</span><span class="c" style="left:623px">10.40</span><i class="vs" style="left:44px"></i><i class="vs" style="left:147px"></i><i class="vs" style="left:352px"></i><i class="vs" style="left:429px"></i><i class="vs" style="left:617px"></i><i class="vs" style="left:750px"></i></div>
<div class="rw" style="top:239px"><svg class="star" width="20" height="19" viewBox="-10 -10 20 19"><path d="M0 -8.3L2.35 -2.75L8.4 -2.3L3.8 1.65L5.2 7.5L0 4.3L-5.2 7.5L-3.8 1.65L-8.4 -2.3L-2.35 -2.75Z" fill="#fff" stroke="#666" stroke-width="1.35" stroke-linejoin="round" transform="scale(1.04)"/></svg><span class="c p" style="left:74.2px">User Pa<u>...</u></span><span class="c" style="left:152.8px">centertohole</span><span class="c" style="left:357.8px">mm</span><span class="c" style="left:434.6px;letter-spacing:.6px">5.15 mm + 2.35 mm</span><span class="c" style="left:623px">7.50</span><i class="vs" style="left:44px"></i><i class="vs" style="left:147px"></i><i class="vs" style="left:352px"></i><i class="vs" style="left:429px"></i><i class="vs" style="left:617px"></i><i class="vs" style="left:750px"></i></div>
<div class="rw" style="top:261px"><svg class="star" width="20" height="19" viewBox="-10 -10 20 19"><path d="M0 -8.3L2.35 -2.75L8.4 -2.3L3.8 1.65L5.2 7.5L0 4.3L-5.2 7.5L-3.8 1.65L-8.4 -2.3L-2.35 -2.75Z" fill="#fff" stroke="#666" stroke-width="1.35" stroke-linejoin="round" transform="scale(1.04)"/></svg><span class="c p" style="left:74.2px">User Pa<u>...</u></span><span class="c" style="left:152.8px">doorholeradius</span><span class="c" style="left:357.8px">mm</span><span class="c" style="left:434.6px;word-spacing:-.8px">2.5 mm</span><span class="c" style="left:623px">2.50</span><i class="vs" style="left:44px"></i><i class="vs" style="left:147px"></i><i class="vs" style="left:352px"></i><i class="vs" style="left:429px"></i><i class="vs" style="left:617px"></i><i class="vs" style="left:750px"></i></div>
<div class="gr" style="top:283px"><svg class="chv" width="12" height="8" viewBox="0 0 12 8"><path d="M1.3 1.5L6 6.2L10.7 1.5" fill="none" stroke="#c0c0c0" stroke-width="1.2"/></svg><div class="gbg" style="left:22px"></div><span class="gl" style="left:28.3px">Model Param...</span><i class="vs" style="left:147px"></i><i class="vs" style="left:352px"></i><i class="vs" style="left:429px"></i><i class="vs" style="left:617px"></i><i class="vs" style="left:750px"></i></div>
<div class="rw vr" style="top:305px"><svg class="chr" width="8" height="12" viewBox="0 0 8 12"><path d="M1.8 1.5L6 6L1.8 10.5" fill="none" stroke="#b4b4b4" stroke-width="1.2"/></svg><span class="c b" style="left:50px">Voron 2.4 ...</span><i class="vs" style="left:44px"></i><i class="vs" style="left:147px"></i><i class="vs" style="left:352px"></i><i class="vs" style="left:429px"></i><i class="vs" style="left:617px"></i><i class="vs" style="left:750px"></i></div>
<div class="sb"><i class="th"></i></div>
</div>
<div class="ok">OK</div>
</div>
</body></html>
